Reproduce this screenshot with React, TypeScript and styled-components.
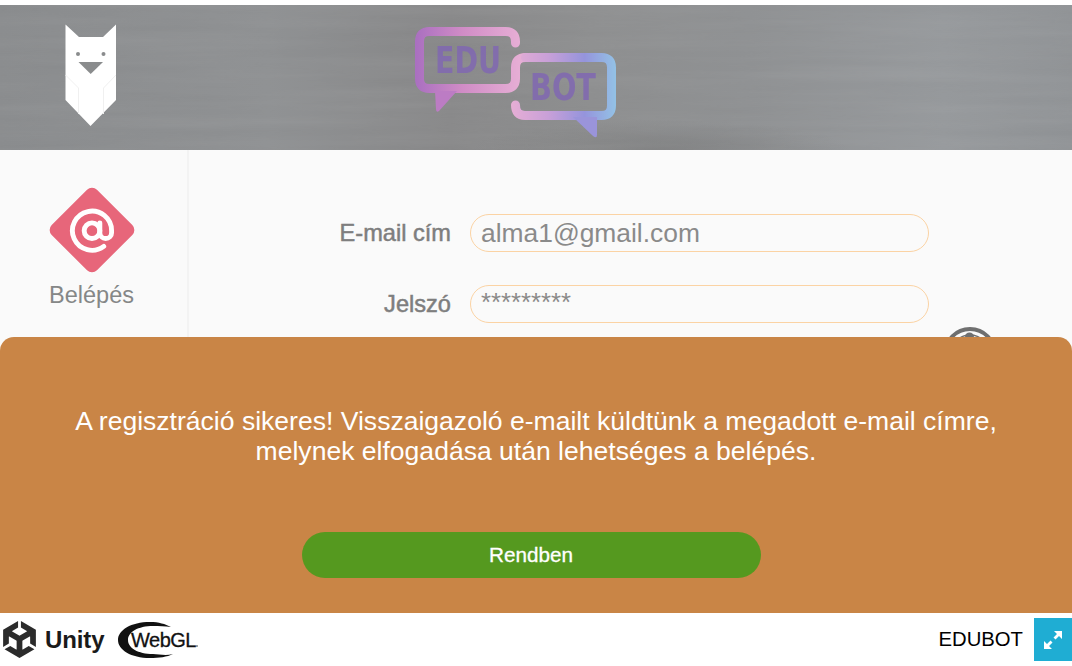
import styled, { createGlobalStyle } from "styled-components";
import { AtSign } from "lucide-react";
import { SiUnity } from "react-icons/si";

const GlobalStyle = createGlobalStyle`
	html, body {
		margin: 0;
		padding: 0;
		background: #fff;
		font-family: "Liberation Sans", Arial, sans-serif;
	}
`;

const Page = styled.div`
	width: 1072px;
	height: 666px;
	padding-top: 5px;
	box-sizing: border-box;
	display: flex;
	flex-direction: column;
	overflow: hidden;
`;

const Stage = styled.div`
	position: relative;
	height: 608px;
	display: flex;
	flex-direction: column;
	flex: none;
`;

const Header = styled.header`
	position: relative;
	height: 145px;
	flex: none;
	overflow: hidden;
	background:
		radial-gradient(ellipse 190px 30px at 660px 145px, rgba(110, 110, 110, 0.4), rgba(110, 110, 110, 0)),
		linear-gradient(90deg, #898b8d 0%, #8e9092 25%, #878788 42%, #8d8e8f 55%, #8e9092 70%, #95989b 88%, #909396 100%);
`;

const Grain = styled.svg`
	position: absolute;
	inset: 0;
	width: 100%;
	height: 100%;
	opacity: 0.1;
`;

const Mascot = styled.svg`
	position: absolute;
	left: 65px;
	top: 19px;
	width: 52px;
	height: 103px;
`;

const EduLogo = styled.svg`
	position: absolute;
	left: 412px;
	top: 22px;
	width: 208px;
	height: 116px;
	filter: blur(0.6px);
`;

const Body = styled.main`
	flex: 1;
	display: flex;
	background: #fafafa;
`;

const Sidebar = styled.aside`
	width: 189px;
	flex: none;
	box-sizing: border-box;
	border-right: 2px solid #f3f3f3;
	padding: 36px 4px 0 0;
	display: flex;
	flex-direction: column;
	align-items: center;
`;

const DiamondSlot = styled.div`
	width: 88px;
	height: 88px;
	display: flex;
	align-items: center;
	justify-content: center;
`;

const Diamond = styled.div`
	width: 64px;
	height: 64px;
	flex: none;
	border-radius: 7px;
	background: #e7667a;
	transform: rotate(45deg);
	display: flex;
	align-items: center;
	justify-content: center;
	color: #fff;

	svg {
		transform: rotate(-45deg);
	}
`;

const TabLabel = styled.span`
	margin-top: 7px;
	font-size: 23.5px;
	line-height: 28px;
	color: #858787;
`;

const Form = styled.form`
	flex: 1;
	display: flex;
	flex-direction: column;
	gap: 33px;
	padding-top: 64px;
`;

const Row = styled.div`
	display: flex;
	align-items: center;
	gap: 19px;
`;

const Label = styled.label`
	width: 262px;
	text-align: right;
	font-size: 23.6px;
	color: #7e7e7e;
	-webkit-text-stroke: 0.5px #7e7e7e;
`;

const Field = styled.div`
	width: 459px;
	height: 38px;
	box-sizing: border-box;
	border: 1.5px solid #fbd3a4;
	border-radius: 19px;
	padding-left: 10px;
	font-size: 26.4px;
	line-height: 37px;
	color: #8a8a8a;
`;

const PasswordField = styled(Field)`
	font-size: 25.7px;
	line-height: 33px;
`;

const HelpIcon = styled.svg`
	position: absolute;
	left: 942px;
	top: 321px;
	width: 56px;
	height: 56px;
`;

const Modal = styled.section`
	position: absolute;
	left: 0;
	right: 0;
	top: 332px;
	height: 276px;
	background: #c98546;
	border-radius: 14px 14px 0 0;
	display: flex;
	flex-direction: column;
	align-items: center;
`;

const Message = styled.p`
	margin: 69px 0 0;
	width: 1040px;
	text-align: center;
	font-size: 26.55px;
	line-height: 30px;
	color: #fff;
`;

const OkButton = styled.button`
	margin: 66px 10px 0 0;
	width: 459px;
	height: 46px;
	border: 0;
	border-radius: 23px;
	background: #55991f;
	color: #fff;
	font-family: inherit;
	font-size: 20.7px;
	-webkit-text-stroke: 0.3px #fff;
`;

const Footer = styled.footer`
	height: 53px;
	flex: none;
	display: flex;
	align-items: center;
	background: #fff;
`;

const Badges = styled.div`
	display: flex;
	align-items: center;
	padding-left: 1px;
	flex: 1;
	color: #2b2b2b;
`;

const UnityWord = styled.span`
	margin-left: 7px;
	font-size: 24px;
	font-weight: 700;
	letter-spacing: -0.1px;
	color: #1a1a1a;
`;

const WebGlMark = styled.svg`
	margin-left: 12px;
	width: 88px;
	height: 40px;
`;

const Title = styled.span`
	font-size: 20.3px;
	color: #000;
	margin: -1px 11px 0 0;
`;

const FullscreenButton = styled.button`
	width: 38px;
	height: 43px;
	border: 0;
	padding: 0;
	background: #1fadd3;
	display: flex;
	align-items: center;
	justify-content: center;
	flex: none;
`;

export default function App() {
	return (
		<Page>
			<GlobalStyle />
			<Stage>
				<Header>
					<Grain>
						<filter id="wood">
							<feTurbulence type="fractalNoise" baseFrequency="0.004 0.09" numOctaves="4" seed="7" />
							<feColorMatrix type="saturate" values="0" />
						</filter>
						<rect width="100%" height="100%" filter="url(#wood)" />
					</Grain>
					<Mascot viewBox="0 0 52 103">
						<path fill="#fff" d="M0.5 0.5 L14 13 H38 L51 0.5 V76 L25.5 102 L0.5 76 Z" />
						<circle cx="13" cy="30" r="2" fill="#8a8c8d" />
						<circle cx="38.5" cy="30" r="2" fill="#8a8c8d" />
						<path fill="#8a8c8d" d="M13.5 38 H38 L25.7 50 Z" />
						<path fill="none" stroke="#f0f0f0" d="M0.5 51 L13.5 64 V90 M51 51 L38.5 64 V90" />
					</Mascot>
					<EduLogo viewBox="0 0 208 116">
						<defs>
							<linearGradient id="bubbleA" gradientUnits="userSpaceOnUse" x1="3" x2="108" y1="0" y2="0">
								<stop offset="0" stopColor="#a96fc0" />
								<stop offset="0.45" stopColor="#d08cc6" />
								<stop offset="1" stopColor="#e6aed5" />
							</linearGradient>
							<linearGradient id="bubbleB" gradientUnits="userSpaceOnUse" x1="99" x2="204" y1="0" y2="0">
								<stop offset="0" stopColor="#e6aed5" />
								<stop offset="0.35" stopColor="#c9a0d8" />
								<stop offset="0.7" stopColor="#9594dc" />
								<stop offset="1" stopColor="#93c2e6" />
							</linearGradient>
						</defs>
						<path
							fill="none"
							stroke="url(#bubbleA)"
							strokeWidth="9"
							strokeLinecap="round"
							d="M103.5 16 V14.5 Q103.5 4.5 93.5 4.5 H17.5 Q7.5 4.5 7.5 14.5 V51.5 Q7.5 61.5 17.5 61.5 H93.5 Q103.5 61.5 103.5 51.5 V40.5 Q103.5 30.5 113.5 30.5"
						/>
						<path fill="#bc7cc4" d="M23 64 H45 L27 84 Q24 86 24 82 Z" />
						<path
							fill="none"
							stroke="url(#bubbleB)"
							strokeWidth="9"
							strokeLinecap="round"
							d="M113.5 30.5 H189.5 Q199.5 30.5 199.5 40.5 V78.5 Q199.5 88.5 189.5 88.5 H113 Q103.5 88.5 103.5 78"
						/>
						<path fill="#9a94da" d="M161 90 H185 V108 Q185 112 181 109 Z" />
						<text x="23" y="46" fontFamily="DejaVu Sans Condensed, Liberation Sans" fontWeight="700" fontSize="38" fill="#8067b2" fillOpacity="0.85" textLength="66" lengthAdjust="spacingAndGlyphs">EDU</text>
						<text x="118" y="73" fontFamily="DejaVu Sans Condensed, Liberation Sans" fontWeight="700" fontSize="38" fill="#8067b2" fillOpacity="0.85" textLength="66" lengthAdjust="spacingAndGlyphs">BOT</text>
					</EduLogo>
				</Header>
				<Body>
					<Sidebar>
						<DiamondSlot>
							<Diamond>
								<AtSign size={47} strokeWidth={2.5} />
							</Diamond>
						</DiamondSlot>
						<TabLabel>Belépés</TabLabel>
					</Sidebar>
					<Form>
						<Row>
							<Label>E-mail cím</Label>
							<Field>alma1@gmail.com</Field>
						</Row>
						<Row>
							<Label>Jelszó</Label>
							<PasswordField>*********</PasswordField>
						</Row>
					</Form>
				</Body>
				<HelpIcon viewBox="0 0 56 56">
					<circle cx="28" cy="28" r="25" fill="none" stroke="#6f6f6f" strokeWidth="4" />
					<circle cx="28" cy="28" r="19" fill="none" stroke="#6f6f6f" strokeWidth="1.5" />
					<circle cx="27.5" cy="11" r="4.5" fill="#6f6f6f" />
				</HelpIcon>
				<Modal>
					<Message>
						A regisztráció sikeres! Visszaigazoló e-mailt küldtünk a megadott e-mail címre,
						<br />
						melynek elfogadása után lehetséges a belépés.
					</Message>
					<OkButton type="button">Rendben</OkButton>
				</Modal>
			</Stage>
			<Footer>
				<Badges>
					<SiUnity size={37} />
					<UnityWord>Unity</UnityWord>
					<WebGlMark viewBox="0 0 88 40">
						<path fill="#111" d="M33 2 C14 2 1 10 1 20 C1 30 14 38 33 38 C42 38 50 37 56 34 C48 36 42 34 36 34 C21 34 11 28 11 20 C11 12 21 6 36 6 C42 6 48 6 54 7 C48 4 42 2 33 2 Z" />
						<text x="14" y="27" fontFamily="Liberation Sans" fontSize="20" letterSpacing="-0.5" fill="#111" stroke="#111" strokeWidth="0.3">WebGL</text>
						<circle cx="80" cy="26" r="0.8" fill="#333" />
					</WebGlMark>
				</Badges>
				<Title>EDUBOT</Title>
				<FullscreenButton type="button" aria-label="Teljes képernyő">
					<svg width="20" height="20" viewBox="0 0 20 20">
						<path fill="#fff" d="M11 1 H19 V9 L16 6 L12.5 9.5 L10.5 7.5 L14 4 Z" />
						<path fill="#fff" d="M9 19 H1 V11 L4 14 L7.5 10.5 L9.5 12.5 L6 16 Z" />
					</svg>
				</FullscreenButton>
			</Footer>
		</Page>
	);
}
